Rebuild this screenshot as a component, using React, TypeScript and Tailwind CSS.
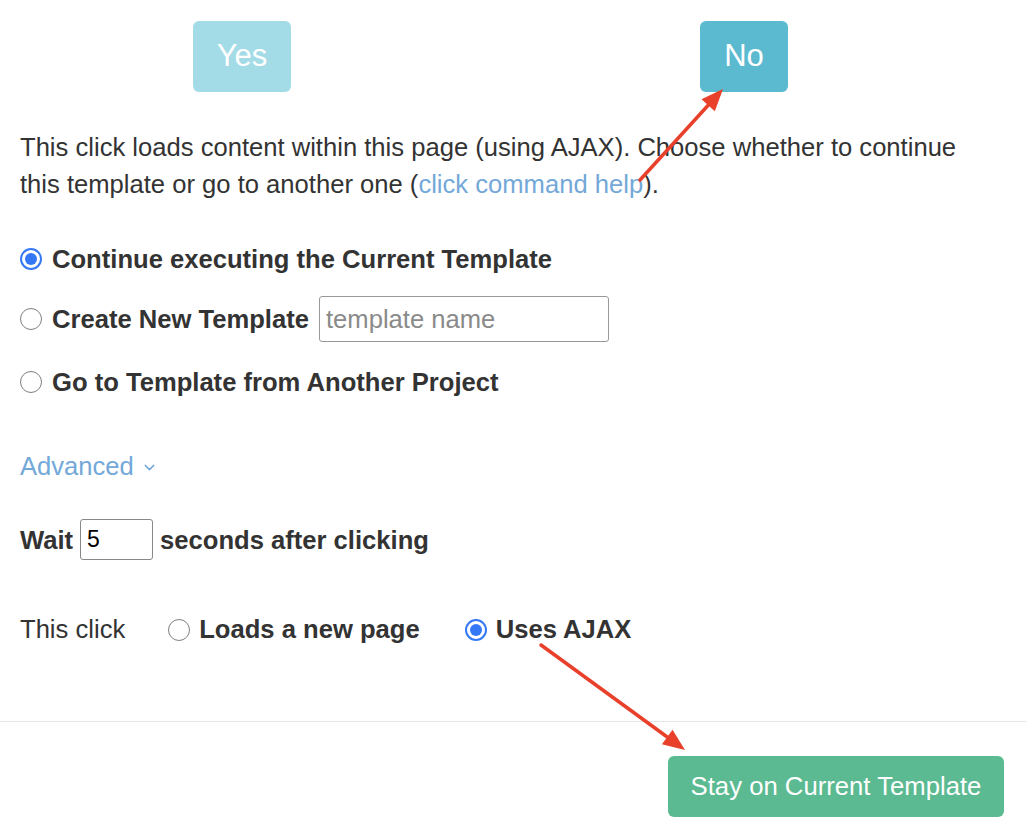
import { ChevronDown } from "lucide-react";

const Radio = ({ checked }: { checked?: boolean }) => (
  <span
    className={
      checked
        ? "flex h-[22px] w-[22px] shrink-0 items-center justify-center rounded-full border-[2px] border-[#3478f6] bg-white"
        : "flex h-[22px] w-[22px] shrink-0 rounded-full border-[1.5px] border-[#808080] bg-white"
    }
  >
    {checked && <span className="h-[12px] w-[12px] rounded-full bg-[#3478f6]" />}
  </span>
);

const Arrow = ({ x1, y1, x2, y2 }: { x1: number; y1: number; x2: number; y2: number }) => {
  const a = Math.atan2(y2 - y1, x2 - x1);
  const len = 22;
  const w = 9;
  const bx = x2 - len * Math.cos(a);
  const by = y2 - len * Math.sin(a);
  const px = -Math.sin(a) * w;
  const py = Math.cos(a) * w;
  return (
    <g>
      <line x1={x1} y1={y1} x2={bx} y2={by} stroke="#e8402a" strokeWidth="3.5" strokeLinecap="round" />
      <polygon points={`${x2},${y2} ${bx + px},${by + py} ${bx - px},${by - py}`} fill="#e8402a" />
    </g>
  );
};

const App = () => {
  return (
    <div
      className="relative min-h-screen w-[1026px] bg-white text-[#333]"
      style={{ fontFamily: '"Liberation Sans", Arial, sans-serif' }}
    >
      <div className="flex pl-[193px] pt-[21px]">
        <button className="h-[71px] w-[98px] rounded-[6px] bg-[#a3dbe6] text-[31px] text-white">Yes</button>
        <button className="ml-[409px] h-[71px] w-[88px] rounded-[6px] bg-[#5bbacf] text-[31px] text-white">No</button>
      </div>

      <div className="px-[20px]">
        <p className="mt-[37px] max-w-[960px] text-[25.6px] leading-[37px]">
          This click loads content within this page (using AJAX). Choose whether to continue this template or go to
          another one (<span className="text-[#73a8d8]">click command help</span>).
        </p>

        <div className="mt-[33px] flex flex-col text-[25.6px] font-bold">
          <label className="flex h-[46px] items-center gap-[10px]">
            <Radio checked />
            <span>Continue executing the Current Template</span>
          </label>
          <label className="mt-[14px] flex h-[46px] items-center gap-[10px]">
            <Radio />
            <span>Create New Template</span>
            <input
              placeholder="template name"
              className="h-[46px] w-[290px] rounded-[3px] border border-[#999] px-[6px] text-[25.6px] font-normal placeholder:text-[#8a8a8a] outline-none"
            />
          </label>
          <label className="mt-[17px] flex h-[46px] items-center gap-[10px]">
            <Radio />
            <span>Go to Template from Another Project</span>
          </label>
        </div>

        <div className="mt-[42px] flex items-center gap-[7px] text-[25.6px] text-[#73a8d8]">
          <span>Advanced</span>
          <ChevronDown className="mt-[3px] h-[17px] w-[17px]" strokeWidth={2} />
        </div>

        <div className="mt-[34px] flex items-center text-[25.6px] font-bold">
          <span>Wait</span>
          <input
            defaultValue="5"
            className="ml-[7px] mr-[7px] h-[41px] w-[73px] rounded-[3px] border border-[#888] px-[6px] text-[23px] font-normal text-black outline-none"
          />
          <span>seconds after clicking</span>
        </div>

        <div className="mt-[50px] flex items-center text-[25.6px]">
          <span>This click</span>
          <label className="ml-[43px] flex items-center gap-[9px] font-bold">
            <Radio />
            <span>Loads a new page</span>
          </label>
          <label className="ml-[45px] flex items-center gap-[9px] font-bold">
            <Radio checked />
            <span>Uses AJAX</span>
          </label>
        </div>
      </div>

      <div className="mt-[72px] border-t border-[#e5e5e5]" />

      <div className="flex justify-end pr-[22px] pt-[34px] pb-[13px]">
        <button className="h-[61px] w-[336px] rounded-[6px] bg-[#5bba91] text-[25.7px] text-white">
          Stay on Current Template
        </button>
      </div>

      <svg className="pointer-events-none absolute left-0 top-0" width="1026" height="830">
        <Arrow x1={640} y1={180} x2={723} y2={89} />
        <Arrow x1={541} y1={645} x2={685} y2={750} />
      </svg>
    </div>
  );
};

export default App;
